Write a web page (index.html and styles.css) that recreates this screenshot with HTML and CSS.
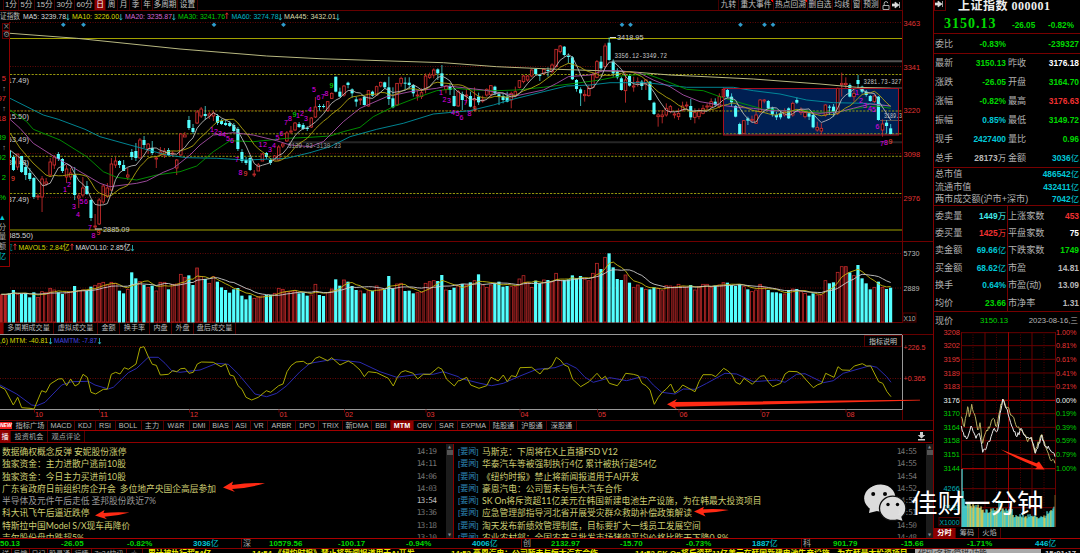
FILE: index.html
```html
<!DOCTYPE html>
<html lang="zh-CN">
<head>
<meta charset="utf-8">
<title>上证指数 000001</title>
<link rel="stylesheet" href="styles.css">
</head>
<body>
<div class="app">
  <div class="workspace">
    <main class="main">
      <nav class="toolbar">
        <div class="periods"><span></span><span>1分</span><span>5分</span><span>15分</span><span>30分</span><span>60分</span><span class="on">日</span><span>周</span><span>月</span><span>季</span><span>年</span><span>多周期</span><span>设置</span></div>
        <div class="tools"><span>九转</span><span class="dot">重大事件</span><span class="dot">热点回溯</span><span>删自选</span><span>均线</span><span>窗</span><span>预测</span>
          <span><svg width="8" height="9" viewBox="0 0 8 9"><path d="M1 4.5h6v4H1zM2.2 4V2.2a1.8 1.6 0 0 1 3.6 0" fill="none" stroke="#aaa"/></svg></span>
          <span><svg width="9" height="8" viewBox="0 0 9 8"><path d="M0 3h3V1l4 3-4 3V5H0zM7.5 1v6" fill="#ddd" stroke="#ddd" stroke-width=".7"/></svg></span></div>
      </nav>
      <svg id="price" class="chart" width="933" height="312" viewBox="0 11 933 312"></svg>
      <nav class="voltabs"><span class="on"></span><span>多周期成交量</span><span>虚拟成交量</span><span>金额</span><span>换手率</span><span>内盘</span><span>外盘</span><span>盘后成交量</span></nav>
      <svg id="mtm" class="chart" width="933" height="86" viewBox="0 334 933 86"></svg>
      <nav class="indicators"><span class="new"><b>NEW</b></span><span>指标广场</span><span>MACD</span><span>KDJ</span><span>RSI</span><span>BOLL</span><span>主力</span><span>W&amp;R</span><span>DMI</span><span>BIAS</span><span>ASI</span><span>VR</span><span>ARBR</span><span>DPO</span><span>TRIX</span><span>新DMA</span><span>BBI</span><span class="on">MTM</span><span>OBV</span><span>SAR</span><span>EXPMA</span><span>陆股通</span><span>沪股通</span><span>深股通</span></nav>
      <nav class="newstabs"><span class="on">播</span><span>投资机会</span><span>观点评论</span>
        <svg class="dl" width="9" height="9" viewBox="0 0 9 9"><path d="M3 0h3v3h2.3L4.500 6.600.7 3H3zM1 7h7v1.600H1z" fill="#ccc"/></svg></nav>
      <section class="news">
        <ul class="left">
          <li><span>数据确权概念反弹 安妮股份涨停</span><time>14:19</time></li>
          <li><span>独家资金：主力进散户逃前10股</span><time>14:11</time></li>
          <li><span>独家资金：今日主力买进前10股</span><time>14:06</time></li>
          <li><span>广东省政府日前组织房企开会&nbsp; 多位地产央国企高层参加</span><time>14:03</time></li>
          <li class="read"><span>半导体及元件午后走低 圣邦股份跌近7%</span><time>13:54</time></li>
          <li><span>科大讯飞午后逼近跌停</span><time>13:36</time></li>
          <li><span>特斯拉中国Model S/X现车再降价</span><time>13:18</time></li>
          <li><span>吉尔股份盘中跌超5%</span><time>13:10</time></li>
        </ul>
        <div class="scroll"><i>▲</i><b></b><i>▼</i></div>
        <ul class="right">
          <li><em>[要闻]</em><span>马斯克：下周将在X上直播FSD V12</span><time>14:55</time></li>
          <li><em>[要闻]</em><span>华泰汽车等被强制执行4亿 累计被执行超54亿</span><time>14:55</time></li>
          <li><em>[要闻]</em><span>《纽约时报》禁止将新闻报道用于AI开发</span><time>14:54</time></li>
          <li><em>[要闻]</em><span>豪恩汽电：公司暂未与恒大汽车合作</span><time>14:52</time></li>
          <li><em>[要闻]</em><span>SK On将斥资超11亿美元在韩国新建电池生产设施，为在韩最大投资项目</span><time>14:52</time></li>
          <li><em>[要闻]</em><span>应急管理部指导河北省开展受灾群众救助补偿政策解读</span><time>14:51</time></li>
          <li><em>[要闻]</em><span>淘天发布新绩效管理制度，目标要扩大一线员工发展空间</span><time>14:50</time></li>
          <li><em>[要闻]</em><span>农业农村部：全国农产品批发市场猪肉平均价格比昨天下降0.8%</span><time>14:48</time></li>
        </ul>
        <div class="scroll"><i>▲</i><b></b><i>▼</i></div>
      </section>
    </main>
    <aside class="side">
      <header><span class="go"><svg width="9" height="8" viewBox="0 0 9 8"><path d="M0 3h3V1l4 3-4 3V5H0zM7.500 1v6" fill="#ddd" stroke="#ddd" stroke-width=".7"/></svg></span><h1>上证指数 000001</h1></header>
      <div class="quote g"><strong>3150.13</strong><b>-26.05</b><b>-0.82%</b></div>
      <div class="rows one"><p><span>委比</span><b class="g">-0.83%</b></p><p><span></span><b class="g">-239327</b></p></div>
      <div class="rows six">
        <p><span>最新</span><b class="g">3150.13</b></p><p><span>昨收</span><b class="w">3176.18</b></p>
        <p><span>涨跌</span><b class="g">-26.05</b></p><p><span>开盘</span><b class="g">3164.70</b></p>
        <p><span>涨幅</span><b class="g">-0.82%</b></p><p><span>最高</span><b class="r">3176.63</b></p>
        <p><span>振幅</span><b class="c">0.85%</b></p><p><span>最低</span><b class="g">3149.72</b></p>
        <p><span>现手</span><b class="c">2427400</b></p><p><span>量比</span><b class="g">0.96</b></p>
        <p><span>总手</span><b>28173<u>万</u></b></p><p><span>金额</span><b class="c">3036<u>亿</u></b></p>
      </div>
      <div class="caps">
        <p><span>总市值</span><b class="c">486542<u>亿</u></b></p>
        <p><span>流通市值</span><b class="c">432411<u>亿</u></b></p>
        <p><span>两市成交额(沪市+深市)</span><b class="c">7042<u>亿</u></b></p>
      </div>
      <div class="rows stats">
        <p><span>委卖量</span><b class="lc">1449<u>万</u></b></p><p><span>上涨家数</span><b class="r">453</b></p>
        <p><span>委买量</span><b class="r">1425<u>万</u></b></p><p><span>平盘家数</span><b class="w">75</b></p>
        <p><span>卖金额</span><b class="c">69.66<u>亿</u></b></p><p><span>下跌家数</span><b class="g">1749</b></p>
        <p><span>买金额</span><b class="c">68.62<u>亿</u></b></p><p><span>市盈</span><b>14.81</b></p>
        <p><span>换手</span><b class="c">0.64%</b></p><p><span>市盈(动)</span><b>13.09</b></p>
        <p><span>均价</span><b class="g">23.66</b></p><p><span>市净率</span><b>1.31</b></p>
      </div>
      <div class="now"><span>现价</span><b class="g">3150.13</b><time>2023-08-16,三</time></div>
      <svg id="intraday" class="chart" width="147" height="199" viewBox="933 329 147 199"></svg>
      <nav class="sidetabs"><span class="on">分时</span><span>筹码</span><span>火焰</span></nav>
    </aside>
  </div>
  <footer class="indexbar"><b>50.13</b><b>-26.05</b><b>-0.82%</b><b class="c">3036<u>亿</u></b><i>深</i><b>10579.56</b><b>-100.17</b><b>-0.94%</b><b class="c">4006<u>亿</u></b><i>创</i><b>2132.97</b><b>-15.70</b><b>-0.73%</b><b class="c">1887<u>亿</u></b><i>科</i><b>901.79</b><b>-15.66</b><b>-1.71%</b><b class="c">446<u>亿</u></b></footer>
  <div class="ticker"><div class="mini"><span>详</span><span>反馈</span><span>日记</span><span>股灵通</span><span>行情</span><span>7x24快讯</span><span>-☆-</span></div><b>累计被执行超54亿</b><b>14:54 《纽约时报》禁止将新闻报道用于AI开发</b><b>14:52 豪恩汽电：公司暂未与恒大汽车合作</b><b>14:52 SK On将斥资超11亿美元在韩国新建电池生产设施，为在韩最大投资项目</b><span class="search">代码/名称/简拼/功能</span><b>15:01:17</b></div>

  <div class="dock"><span class="r">5</span><span>↑</span><span class="r">97</span><span>↑</span><span class="r">18</span><span></span><span class="g">89</span><span>↑</span><span class="g">92</span><span></span><span class="g">2</span><span></span><span class="g">%</span><span></span><span class="c">▲</span><span>分</span><span>量</span><span>额</span><span class="c">亿</span></div>
  <div class="dockicons"><span>×</span><span>⚙</span></div>
  <svg class="marks" width="1080" height="553" viewBox="0 0 1080 553">
    <g fill="#ff2a14">
      <path d="M667 404.200L677 399l-2 3 245-2.300v.8L675 406.700l2 2.800z"/>
      <path d="M223 487.500l10-6-1 3.400q18-2.500 33-1.700q-16 5-33 5.800l3 3z"/>
      <path d="M95 515.500l9.500-5.500-1 3q13-1.500 26-.4q-12 3.500-25 4.200l2.500 2.500z"/>
      <path d="M694 511.500l10-4.700-1 2.500q14-.8 26 .7q-13 2.500-25.500 3l2 3.500z"/>
      <path d="M1000.500 449.300l36 14 2.500-1.800 5.500 8-9.500-.3 2-2.300q-22-8.500-36.500-17.600z"/>
    </g>
    <g class="wechat">
      <path d="M869 513l1-5.500A15 13.500 0 1 1 877 511z" fill="#e8e8e8"/>
      <ellipse cx="879" cy="498.300" rx="14.800" ry="13" fill="#e8e8e8"/>
      <ellipse cx="892.700" cy="508.300" rx="13.200" ry="12.200" fill="#e8e8e8" stroke="#111" stroke-width="1.300"/>
      <path d="M896 519l6.500 1.800-2-6z" fill="#e8e8e8"/>
      <g fill="#050505"><circle cx="873.200" cy="494" r="2"/><circle cx="885" cy="494" r="2"/><circle cx="888" cy="504.500" r="1.700"/><circle cx="897.500" cy="504.500" r="1.700"/></g>
    </g>
  </svg>
  <div class="watermark">佳财一分钟</div>
</div>
<script src="charts.js"></script>
</body>
</html>
```
FILE: styles.css
```css
* { box-sizing: border-box; margin: 0; padding: 0; }
body { background: #000; overflow: hidden; }
.app {
  position: relative; width: 1080px; height: 553px; overflow: hidden;
  display: flex; flex-direction: column; background: #000; color: #aaa;
  font-family: "Liberation Sans", "Noto Sans CJK SC", sans-serif; font-size: 8px; line-height: 10px; white-space: nowrap;
}
.workspace { display: grid; grid-template-columns: 933px 147px; height: 538px; }
.main { display: flex; flex-direction: column; min-width: 0; }
.chart { display: block; flex: none; }
svg text { white-space: pre; }
u { text-decoration: none; font-weight: 400; }
i, em { font-style: normal; }
.g { color: #00d800; } .r { color: #f03030; } .c { color: #00c8d8; } .lc { color: #40e8e8; } .w { color: #fff; }

.toolbar { height: 11px; width: 903px; display: flex; justify-content: space-between; border-bottom: 1px solid #600; font-size: 7.700px; color: #c0c0c0; }
.toolbar span { display: flex; justify-content: center; align-items: center; height: 10px; border-right: 1px solid #400; }
.periods { display: grid; grid-template-columns: 4px 15px 16px 20px 20px 20px 11px 12px 12px 12px 11px 25px 20px; }
.tools { display: grid; grid-template-columns: 20px 35px 34px 25px 19px 10px 19px 10px 12px; border-left: 1px solid #400; }
.toolbar .on, .voltabs .on, .indicators .on, .newstabs .on, .sidetabs .on { background: #8c0000; color: #fff; }
.tools .dot { background: linear-gradient(225deg, #f00 2px, transparent 2px); }

.voltabs { display: grid; grid-template-columns: 4px 50px 44px 22px 30px 22px 22px 42px; height: 11px; font-size: 7.100px; color: #bbb; }
.voltabs span { text-align: center; line-height: 11px; height: 11px; border-right: 1px solid #500; overflow: hidden; }

.indicators { display: grid; grid-template-columns: 13px 35px 27px 20.500px 20px 26px 22px 26px 20px 23px 18px 17.500px 28px 23px 24px 29px 19px 23px 22px 22px 32px 28px 29px 30px; height: 11px; border-top: 1px solid #600; border-bottom: 1px solid #a00000; font-size: 7.200px; color: #bbb; }
.indicators span { text-align: center; line-height: 10px; height: 9px; border-right: 1px solid #500; overflow: hidden; }
.indicators .on { font-weight: 700; }
.indicators .new { border: 0; text-align: left; }
.new b { display: block; width: 12px; height: 7px; margin-top: 1px; background: #f02020; color: #fff; font: italic 700 5px/7px "Liberation Sans", sans-serif; }
.newstabs { display: grid; grid-template-columns: 11px 37px 37px 1fr; height: 12px; border-bottom: 1px solid #900000; font-size: 7.200px; width: 932px; }
.newstabs span { text-align: center; line-height: 11px; border-right: 1px solid #500; overflow: hidden; }
.newstabs .dl { justify-self: end; margin: 1px 6px 0 0; }

.news { display: grid; grid-template-columns: 446px 7px 473px 7px; height: 94px; margin-top: 1px; overflow: hidden; font-size: 8.750px; color: #cdcd72; }
.news ul { list-style: none; padding-top: 2px; }
.news li { display: flex; height: 12.250px; line-height: 12.250px; padding-left: 2px; }
.news .left { padding-right: 10px; }
.news .right { padding-left: 2px; padding-right: 10px; border-left: 1px solid #800; }
.news span { font-family: Lato, "Noto Sans CJK SC", sans-serif; word-spacing: -.3px; }
.news time { margin-left: auto; color: #747474; font: 7.900px/12.250px "DejaVu Sans Mono", monospace; letter-spacing: -.9px; }
.news em { width: 24px; color: #2d87b8; font-size: 8px; }
.news .read { color: #999; }
.news .read time { color: #bbb; }
.scroll { display: flex; flex-direction: column; align-items: center; background: #1c1c1c; height: 94px; }
.scroll i { color: #888; font: 4px/6px "DejaVu Sans", sans-serif; }
.scroll b { width: 6px; height: 5px; background: #555; margin-bottom: auto; }

.side { border-left: 1px solid #800000; display: flex; flex-direction: column; font-size: 8.400px; color: #b8b8b8; }
.side header { display: flex; height: 14px; }
.go { width: 12px; height: 11px; border: 1px solid #600; border-top: 0; }
h1 { margin-left: 12px; font: 700 12px/13px "Liberation Serif", "Noto Sans CJK SC", serif; color: #eee; letter-spacing: .5px; }
.quote { display: grid; grid-template-columns: 78px 36px 1fr; align-items: center; height: 20px; border-bottom: 1px solid #700; }
.quote strong { font: 700 14px/18px "Liberation Serif", serif; letter-spacing: 1px; padding: 1px 0 0 10px; }
.quote b { font-size: 8.200px; padding-top: 5px; }
.rows { display: grid; grid-template-columns: 73px 73px; border-bottom: 1px solid #700; align-content: start; }
.side p { display: flex; justify-content: space-between; align-items: center; padding: 0 1px; min-width: 0; }
.side p span, .now span { font: 9.100px/12px "Liberation Sans", "Noto Sans CJK SC", sans-serif; color: #b0b0b0; }
.one { height: 20px; } .one p { height: 19px; }
.six { height: 114px; } .six p { height: 19px; padding-bottom: 1px; }
.caps { height: 38px; border-bottom: 1px solid #700; } .caps p { height: 12.600px; }
.stats { height: 106px; padding-top: 1px; background: linear-gradient(90deg, transparent 73px, #700 73px, #700 74px, transparent 74px); } .stats p { height: 17.400px; }
.now { display: grid; grid-template-columns: 45px 28px 1fr; align-items: center; height: 17px; padding-left: 1px; }
.now b { font-weight: 400; font-size: 7.800px; } .now time { text-align: right; font-size: 7.700px; padding-right: 2px; }
.sidetabs { display: grid; grid-template-columns: 22px 23px 22px; height: 10px; font-size: 7.200px; }
.sidetabs span { text-align: center; height: 10px; border-right: 1px solid #500; }
.sidetabs .on { font-weight: 700; }

.indexbar { display: grid; grid-template-columns: 61px 66px 66px 48px 28px 69px 68px 66px 49px 30px 69px 66px 66px 49px 32px 68px 66px 68px 45px; height: 11px; border-top: 1px solid #a00; border-bottom: 1px solid #800; line-height: 9px; font-size: 8px; color: #00d800; }
.indexbar .c { color: #00c8d8; }
.indexbar i { color: #a8a8a8; border-left: 1px solid #600; padding-left: 1px; }
.ticker { display: grid; grid-template-columns: 148px 104px 199px 184px 280px 130px 35px; height: 4px; overflow: hidden; font-size: 7.800px; line-height: 10px; color: #e8e800; }
.ticker b { overflow: hidden; height: 4px; }
.ticker b:last-child { color: #ccc; }
.mini { display: grid; grid-template-columns: 12px 18px 18px 24px 20px 35px 16px; color: #aaa; font-size: 7px; overflow: hidden; }
.mini span { border-right: 1px solid #600; text-align: center; overflow: hidden; }
.search { background: #aaa; color: #222; padding-left: 3px; width: 126px; }

.dock { position: absolute; left: 0; top: 22px; width: 10px; height: 245px; background: #000; border: solid #900000; border-width: 0 1px 1px 0; padding-top: 52px; display: flex; flex-direction: column; overflow: hidden; font-size: 7.600px; }
.dock span { flex: 0 0 9.900px; direction: rtl; width: 6px; line-height: 9.900px; }
.dockicons { position: absolute; left: 2px; top: 23px; width: 8px; display: flex; flex-direction: column; color: #888; }
.dockicons span { height: 8px; font: 8px/6px "DejaVu Sans", sans-serif; text-align: center; border: 1px solid #600; }
.marks { position: absolute; left: 0; top: 0; }
.wechat { opacity: .95; }
.watermark { position: absolute; left: 911px; top: 485px; font: 26.500px/34px "Noto Sans CJK SC", sans-serif; color: #fff; }
```
FILE: charts.js
```js
const NS = 'http://www.w3.org/2000/svg';

function add(svg, tag, attrs, text) {
  const el = document.createElementNS(NS, tag);
  for (const key in attrs) el.setAttribute(key, attrs[key]);
  if (text !== undefined) el.textContent = text;
  svg.appendChild(el);
  return el;
}
function label(svg, x, y, text, color, size, len) {
  const a = { x, y, fill: color, 'font-size': size || 8 };
  if (len) { a.textLength = len; a.lengthAdjust = 'spacingAndGlyphs'; }
  return add(svg, 'text', a, text);
}
function trend(svg, x, base, up) {
  const d = up ? `M${x} ${base}v-6M${x - 1.3} ${base - 4.3}l1.300-1.900 1.300 1.900` : `M${x} ${base - 5}v6M${x - 1.3} ${base - 0.8}l1.300 1.900 1.300-1.900`;
  add(svg, 'path', { d, stroke: up ? '#e03030' : '#28b0b8', 'stroke-width': 0.9, fill: 'none' });
}
function rule(svg, x1, x2, y, color, dash, w) {
  add(svg, 'line', { x1, x2, y1: y, y2: y, stroke: color, 'stroke-width': w || 1, 'stroke-dasharray': dash || 'none' });
}
function path(svg, pts, color, w) {
  add(svg, 'polyline', { points: pts.map(p => p[0].toFixed(1) + ',' + p[1].toFixed(1)).join(' '), fill: 'none', stroke: color, 'stroke-width': w || 0.8 });
}
// Flat "x y x y" lists in third-of-pixel units, with an origin.
function seg(ox, oy, str) {
  const n = str.trim().split(/[\s,]+/).map(Number), out = [];
  for (let i = 0; i < n.length; i += 2) out.push([ox + n[i] / 3, oy + n[i + 1] / 3]);
  return out;
}
const xAt = k => 1.26 + 4.08 * k;

/* candles: direction, high, body top, body bottom, low */
const early = `C149 151 158 160|C155 157 170 171|R154 154 167 170|C156 156 172 173|C163 167 175 180|C168 173 179 181|C177 178 197 199|R194 196 197 200|R176 179 197 212|R178 182 184 186|R158 162 175 177|R155 157 165 169|C152 154 159 161|C158 159 171 173|R165 169 177 183|R168 173 177 180|C167 175 195 200|R193 196 198 208|R177 188 195 197|C181 186 194 195|C199 200 218 221|R214 226 227 230|R198 200 224 225|R184 186 202 204|R183 188 196 198|R158 164 190 191|R157 161 165 168|C160 161 165 168|C160 165 171 171|R168 175 177 180|C149 152 157 160|C143 151 158 161|R138 140 158 158|C136 140 145 148|R143 144 149 154|C141 148 153 155|R156 158 159 168|R147 152 154 156|R148 151 155 158|C148 150 155 156|R151 153 154 157|R159 160 168 175|R133 134 155 156|R132 135 137 137|C116 120 128 130|C124 128 132 134|R110 112 123 124|R107 109 116 118|C106 114 116 120|R112 114 116 119|R111 113 116 121|C114 116 123 125|C119 121 124 125|C120 123 125 126|C121 123 126 127|C123 125 131 132|C127 129 149 151|C149 152 161 163|C157 160 163 165|C155 158 170 171|R170 174 175 177|R163 165 171 171|R153 154 161 161|C152 153 157 159|C158 160 163 165|R155 156 160 160|R145 147 160 161|R142 144 146 148|R131 133 141 142|R126 131 132 134|R122 123 130 131|C122 124 127 128|C123 125 129 130|C126 128 129 131|R117 118 127 128|R97 107 117 118`;
const late = `C312 318 321 332|C312 318 321 325|R303 305 332 335|R277 280 295 297|C230 230 275 277|C263 275 290 292|R255 258 285 290|C245 248 255 265|C265 268 280 293|C290 298 305 320|R295 297 299 315|C287 290 315 317|R270 272 318 320|C272 275 287 290|R257 260 285 287|R245 247 258 262|C245 247 262 267|C230 262 297 315|C262 295 322 325|R250 250 315 318|R230 235 250 260|C232 248 251 268|C232 248 255 267|C253 255 280 290|R272 285 288 302|R265 278 290 297|R220 228 265 280|R218 225 232 237|R205 210 225 235|C205 208 220 240|C195 220 258 260|R255 258 268 280|C250 258 270 285|C265 288 318 320|R270 275 318 320|C275 282 300 330|R268 285 288 310|C275 288 320 322|R262 297 300 335|C278 290 307 315|R287 300 303 308|R265 268 285 290|R255 257 283 292|C257 260 280 285|C278 283 288 315|C280 288 300 310|C275 290 305 307|R275 280 300 325|R260 275 288 292|R240 242 262 265|R225 228 245 250|R225 228 240 245|R208 210 228 232|C205 207 222 225|C222 225 228 243|R205 208 220 225|C202 210 213 230|R190 195 215 220|R147 148 200 202|R135 138 155 160|C138 140 165 170|C160 168 171 190|C168 172 238 240|C237 240 267 275|C262 268 280 318|R270 283 287 305|R255 265 287 290|R218 225 262 265|R180 185 232 235|C168 185 205 210|R130 138 200 205|C112 128 180 182|C178 185 220 230|C205 215 232 238|C230 235 270 272|R220 240 272 308|C222 228 257 260|R230 258 261 275|R232 245 249 260|C240 245 258 270|R237 240 250 270|C243 245 300 302|C305 308 342 345|R340 345 350 380|R330 345 350 370|R310 325 345 350|R315 320 335 340|R335 342 345 355|R325 340 350 360|R305 318 330 335|R305 315 318 330|C297 318 352 360|R325 338 352 370|R325 335 350 358|R315 325 340 343|R310 318 321 332|R295 305 320 325|C295 305 315 320|R280 290 320 325|R262 268 290 298|C265 270 290 295|C280 290 307 320|C315 318 350 352|C368 372 403 405|R360 362 400 402|C350 355 362 375|R347 358 361 368|R335 345 370 372|R297 300 335 340|R297 300 303 310|C300 303 325 330|C320 325 343 350|C335 345 352 360|C330 340 352 358|R325 335 345 350|C322 325 355 357|R305 310 345 350|C292 300 308 312|R322 328 338 345|R332 338 350 355|C338 340 350 360|C340 345 382 385|R365 382 390 395|R370 385 393 403|R313 315 345 350|C315 320 323 345|C312 320 335 350|R263 265 340 345|R218 250 254 290|R232 250 254 265|C250 255 290 292|R270 280 290 305|C225 240 252 265|C257 260 275 280|C270 275 285 290|C285 288 303 305|R283 288 305 310|C288 290 360 362|R358 372 390 410|C360 368 378 400|C372 385 402 404`;
const candles = [];
early.split('|').forEach((s, i) => {
  const v = s.slice(1).split(' ').map(Number);
  candles.push({ k: i + 2, up: s[0] === 'R', hi: v[0], top: v[1], bot: v[2], lo: v[3] });
});
late.split('|').forEach((s, i) => {
  const v = s.slice(1).split(' ').map(n => Number(n) / 3);
  candles.push({ k: i + 78, up: s[0] === 'R', hi: v[0], top: v[1], bot: v[2], lo: v[3] });
});
const dir = {};
candles.forEach(c => { dir[c.k] = c.up; });
const CY = '#54ffff', RED = '#d83030', AXIS = '#e03434';

/* price pane */
const P = document.getElementById('price');
[['证指数', 0, 20, '#bbb'], ['MA5: 3239.78', 23, 43, '#ddd', '↓'], ['MA10: 3226.00', 72, 47, '#d8d800', '↓'], ['MA20: 3235.87', 125, 47, '#d468d4', '↓'], ['MA30: 3241.76', 178, 47, '#00cc00', '↑'], ['MA60: 3274.78', 231.500, 47, '#00b8c8', '↓'], ['MA445: 3432.01', 284, 52, '#d8d8a8', '↓']].forEach(m => {
  label(P, m[1], 19, m[0], m[3], 7.5, m[2]);
  if (m[4]) trend(P, m[1] + m[2] + 1.800, 19, m[4] === '↑');
});
[22.5, 66.5, 110.5, 153.5, 197.5, 253.5, 288].forEach(y => rule(P, 10, 902, y, '#600808', '1 1.5'));
add(P, 'rect', { x: 723.500, y: 88.500, width: 175, height: 46.500, fill: '#001f52' });
rule(P, 10, 902, 38.500, '#a0a000');
rule(P, 10, 902, 230, '#a0a000');
[74.5, 111, 133.8, 156.3, 193.5].forEach(y => rule(P, 10, 902, y, '#a8a810', '2.2 1.4', 0.9));
rule(P, 612, 902, 61.300, '#505050', '', 2);
rule(P, 289, 902, 142.200, '#262626', '', 2);
rule(P, 860, 902, 88, '#666');
rule(P, 880, 902, 120.500, '#555');
[63.3, 83.5, 214, 283.5, 622, 630.5, 740.5, 764.5, 773].forEach(x => add(P, 'path', { d: `M${x} 22.4l2.4 2.3-2.4 2.3-2.4-2.3z`, fill: '#2e9ccc' }));
[['17.49)', 82.500], ['15.50)', 119], ['53.49)', 141.500], ['39.48)', 164.500], ['37.49)', 201.500], ['385.50)', 238]].forEach(a => {
  const t = label(P, a[0].length > 6 ? 33 : 29, a[1], a[0], '#d0d0d0', 7.6);
  t.setAttribute('text-anchor', 'end');
});
candles.forEach(c => {
  const x = xAt(c.k), col = c.up ? RED : CY;
  if (c.up) {
    add(P, 'path', { d: `M${x} ${c.hi}V${c.top}M${x} ${c.bot}V${c.lo}`, stroke: col, 'stroke-width': 0.8 });
    add(P, 'rect', { x: x - 1.3, y: c.top, width: 2.6, height: Math.max(1, c.bot - c.top), fill: '#100', stroke: col, 'stroke-width': 0.8 });
  } else {
    add(P, 'path', { d: `M${x} ${c.hi}V${c.lo}`, stroke: col, 'stroke-width': 0.7 });
    add(P, 'rect', { x: x - 1.6, y: c.top, width: 3.1, height: Math.max(1, c.bot - c.top), fill: col });
  }
});
const closes = candles.map(c => (c.up ? c.top : c.bot));
function average(n, from, head) {
  const out = head.slice();
  for (let i = Math.max(from - 2, n - 1); i < closes.length; i++) {
    let s = 0;
    for (let j = i - n + 1; j <= i; j++) s += closes[j];
    out.push([xAt(i + 2), s / n]);
  }
  return out;
}
path(P, [].concat(seg(0, 0, '30 100 230 115 540 147 800 168 960 176'), seg(310, 0, '400 188 560 200 740 208 960 215'), seg(620, 0, '150 225 400 237 600 252 710 262 812 265')), '#b8b880', 1);
path(P, [].concat(seg(0, 0, '30 295 130 345 175 358 255 388'), seg(0, 120, '300 50 390 75 500 105 560 113 650 115 740 120 860 115 930 98'), seg(310, 0, '60 440 120 410 200 388 280 370 370 342 480 332 550 315 600 300 700 275 770 258 840 255 900 248'), seg(620, 0, '0 248 80 248 200 262 340 262 400 272 480 282 560 300 640 308 740 310 812 318')), '#0092a0', 0.9);
path(P, [].concat(seg(0, 0, '30 330 80 365 100 388'), seg(0, 120, '180 60 260 110 310 155 350 172 410 180 470 165 540 155 590 138 640 95 690 62 760 65 860 55'), seg(310, 0, '0 412 60 408 100 395 150 382 190 350 250 320 320 293 380 272 440 265 490 270 560 272 620 270 700 262 780 252 870 240'), seg(620, 0, '0 228 80 222 130 240 200 268 250 272 300 290 360 308 430 328 500 332 560 332 600 337 660 335 710 325 770 318 812 325')), '#009a00', 0.9);
path(P, [].concat(seg(0, 0, '30 358 60 385'), seg(0, 120, '100 70 163 110 215 140 300 190 330 200 410 190 440 183 490 157 520 145 570 105 600 75 640 45 700 38 760 45 830 62 870 75'), seg(310, 0, '0 440 40 425 100 365 150 325 230 290 300 275 380 265 410 258 450 262 520 270 580 280 620 287 700 270 740 250 775 230 840 225 880 212'), seg(620, 0, '0 212 60 220 100 240 150 260 190 285 240 305 300 315 350 322 400 325 450 332 500 332 540 335 600 340 660 335 700 325 750 312 812 318')), '#a850a8', 0.9);
path(P, average(10, 12, [[10, 133], [20, 148], [33, 163], [46, 175]]), '#b0a410', 0.9);
path(P, average(5, 12, [[10, 150], [20, 158], [30, 170], [43, 186]]), '#b8b8b8', 0.9);
add(P, 'rect', { x: 723.500, y: 88.500, width: 175, height: 46.500, fill: 'none', stroke: '#a81020' });

const M = '#e000e8', R9 = '#ff4838', G9 = '#00f000';
[[13, 179, 9, R9], [65, 190, 1], [69, 185, 2], [74, 207, 3], [78, 215, 4], [81.5, 202, 5], [86, 202, 6], [90, 228, 7], [93.500, 236, 8], [98.500, 233, 9, R9],
 [212, 130, 1], [216, 132, 2], [220, 134, 3], [224, 135, 4], [228, 139, 5], [232, 141, 6], [237, 160, 7], [240.5, 173, 8], [245.5, 174, 9, R9],
 [260.5, 145, 1], [265, 145, 2], [270, 149.500, 3], [274, 146, 4], [277.5, 138, 5], [281.5, 134, 6], [286, 123, 7], [290, 119, 8], [294.5, 115, 9, G9], [298, 116, 1], [302, 114, 2], [306, 119, 3], [310, 110, 4], [314, 90, 5], [318.500, 97.500, 6], [323, 97, 7], [326.500, 94, 8], [331.500, 85.500, 9, G9],
 [441, 93, 1], [444.500, 100, 2], [449, 101, 3], [453, 113, 4], [457.500, 114, 5], [461.500, 117.500, 6], [465.500, 103, 7], [469.500, 114, 8], [474.500, 109, 9, R9],
 [857, 93, 1], [861, 101, 2], [865, 106, 3], [870, 109, 4], [874, 110, 5], [877.500, 127, 6], [882, 144, 7], [886, 142.500, 8], [890.500, 142, 9, R9]].forEach(a => label(P, a[0] - 1.9, a[1] + 2.4, a[2], a[3] || M, 7));
const mono = '"Liberation Mono", monospace';
[['2885.09', 103, 232, 26.500, 8], ['3418.95', 617, 40, 26.500, 8], ['3356.12-3349.72', 614.500, 57.500, 52.500, 7.500], ['3139.03-3130.23', 288, 148, 53, 7.500], ['3281.73-327', 863.500, 84, 38, 7.500], ['3189.3', 884, 117.500, 18, 7.500]].forEach((a, i) => {
  label(P, a[1], a[2], a[0], i === 3 ? '#a0a0a0' : '#c8c8c8', a[4], a[3]).setAttribute('font-family', i < 2 ? 'Liberation Sans' : mono);
});
rule(P, 95, 102, 229, '#ddd');
rule(P, 610, 616, 37.500, '#ddd');
add(P, 'path', { d: 'M0 241.500H933M0 322.500H902M902.500 11V323', stroke: '#700000', fill: 'none' });
[['3463', 22.5], ['3341', 66.5], ['3220', 110], ['3098', 153.5], ['2976', 197.5]].forEach(a => label(P, 903.500, a[1] + 3, a[0], AXIS, 8, 16.5));
label(P, 903.500, 256, '5730', '#b8b8b8', 8, 16);
label(P, 903.500, 291, '2889', '#b8b8b8', 8, 16);
add(P, 'rect', { x: 903, y: 313, width: 13, height: 9, fill: 'none', stroke: '#500' });
label(P, 903.500, 321, 'X10', '#b0b0b0', 7.500, 12);
label(P, 9.500, 250, '亿', '#00b8c8', 7, 3); trend(P, 15, 250, true);
label(P, 18.500, 250, 'MAVOL5: 2.84亿', '#d8d800', 7.5, 51); trend(P, 72, 250, true);
label(P, 75.500, 250, 'MAVOL10: 2.85亿', '#ddd', 7.5, 55); trend(P, 132.500, 250, false);

/* volume: bar tops below y=240, third-of-pixel units */
const tops = '163 163 160 150 163 162 160 172 157 172 155 157 145 150 157 162 157 155 138 152 150 152 140 136 130 127 135 127 130 152 160 148 97 115 125 135 142 137 153 127 127 148 133 132 103 112 106 135 84 110 117 130 110 125 142 150 158 148 144 167 178 166 175 170 168 165 165 160 145 148 155 155 152 160 158 167 165 133 165 168 158 147 118 137 120 125 138 150 153 160 152 152 138 148 148 108 145 132 130 153 152 160 158 157 130 125 122 123 105 150 150 143 138 132 135 127 122 103 135 142 135 130 125 140 138 140 140 117 107 127 142 122 130 120 120 125 100 122 120 118 106 115 108 118 122 100 70 87 52 40 82 117 120 105 128 142 135 142 148 148 142 145 152 137 138 140 133 140 142 135 150 140 133 133 142 137 135 128 128 135 138 133 140 148 155 150 133 143 150 157 157 160 162 150 147 147 155 160 167 160 165 165 122 130 127 97 80 80 97 107 75 115 130 148 142 125 142 147 143'.split(' ').map(n => 240 + n / 3);
tops.forEach((y, k) => {
  const x = xAt(k);
  if (dir[k]) add(P, 'rect', { x: x - 1.4, y, width: 2.8, height: 322 - y, fill: k % 3 ? '#0c0000' : '#481010', stroke: '#c02828', 'stroke-width': 0.8 });
  else add(P, 'rect', { x: x - 1.7, y, width: 3.2, height: 322.5 - y, fill: k > 1 ? CY : '#b42424' });
});
[[5, '#c4b810'], [10, '#ccc']].forEach(([n, col]) => path(P, tops.map((_, i) => {
  const part = tops.slice(Math.max(0, i - n + 1), i + 1);
  return [xAt(i), part.reduce((a, b) => a + b, 0) / part.length];
}), col, 0.9));

/* MTM pane */
const T = document.getElementById('mtm');
rule(T, 0, 902, 346.500, '#680808', '1 1.5');
rule(T, 0, 902, 378.500, '#680808', '1 1.5');
add(T, 'path', { d: 'M0 334.500H902.500V409.500H0', stroke: '#999', fill: 'none' });
add(T, 'path', { d: 'M902 334.500H933M902.500 410V420', stroke: '#600', fill: 'none' });
label(T, 0, 343.200, ',6) MTM: -40.81', '#d8d800', 7.5, 48); trend(T, 50.500, 343, false);
label(T, 54, 343.200, 'MAMTM: -7.87', '#4444e0', 7.5, 43); trend(T, 99.500, 343, false);
add(T, 'rect', { x: 864.500, y: 335.500, width: 37, height: 11, fill: '#000', stroke: '#500' });
label(T, 869, 343.500, '指标说明', '#ccc', 7.200, 28);
label(T, 903.500, 349.500, '+226.5', AXIS, 7.500, 22); label(T, 903.500, 381, '+0.365', AXIS, 7.500, 22);
path(T, [].concat(seg(0, 240, '0 435 50 462 95 495 110 497 135 487 185 435 215 425 265 424 285 435 325 447 340 442 385 398 410 385 445 352 475 352 495 370 515 392 540 397 600 390 650 370 685 373 715 402 765 462 800 470 830 460 860 437 900 395 930 370 1000 358 1080 367 1140 395 1190 412 1260 402 1300 403 1330 395 1375 410'), seg(460, 240, '0 415 60 430 95 437 130 430 180 408 230 388 285 383 320 370 350 385 375 412 400 427 450 413 500 422 545 410 560 413 580 435 605 457 645 462 670 447 705 448 740 430 795 400 830 402 880 425 950 420 975 427 1010 403 1035 401 1090 428 1120 422 1150 400 1230 377 1250 382 1280 410 1293 427')), '#2a2ab0', 1);
path(T, [].concat(seg(0, 240, '0 440 15 448 40 495 53 472 65 503 90 505 102 507 125 452 138 457 151 432 175 417 187 416 200 437 212 417 225 438 236 432 249 403 262 412 273 457 287 462 310 448 322 448 334 403 347 397 360 402 373 383 385 388 408 372 420 323 432 320 444 348 457 373 469 376 481 405 505 403 518 392 530 395 542 386 555 385 567 400 580 397 592 372 604 366 640 367 663 380 677 372 690 405 701 408 714 437 726 448 738 472 755 480 775 472 799 452 812 457 836 437 849 432 861 395 873 377 888 366 910 364 922 372 934 370 946 355 958 350 983 362 995 353 1020 375 1045 363 1060 372 1080 390 1093 410 1105 395 1130 398 1165 415 1180 438 1192 412 1204 396 1216 392 1240 400 1253 417 1270 403 1290 403 1315 382 1326 388 1340 418 1363 438 1375 422'), seg(460, 240, '0 422 20 412 32 435 57 445 80 437 93 412 115 423 130 405 142 425 154 407 168 410 180 383 215 382 240 402 252 387 264 387 276 377 289 352 301 360 313 375 325 380 338 418 362 440 387 425 411 400 425 417 436 409 448 430 472 437 485 420 497 400 520 403 535 407 546 430 558 437 570 450 583 493 595 472 607 457 619 447 632 432 644 458 656 450 668 435 705 455 717 425 729 404 755 404 767 410 791 385 803 392 815 403 827 427 840 433 852 415 877 433 901 409 913 407 926 427 938 440 962 430 975 402 987 394 1011 395 1024 403 1036 417 1060 443 1073 434 1085 430 1097 400 1122 412 1134 380 1146 390 1170 391 1183 378 1207 371 1220 378 1232 378 1256 425 1268 430 1281 455 1293 470')), '#a8a800', 1);
[['10', 35], ['11', 100], ['12', 190], ['01', 279.5], ['02', 345], ['03', 426.5], ['04', 520.5], ['05', 598], ['06', 679.5], ['07', 761.5], ['08', 846.5]].forEach(a => {
  label(T, a[1], 417, a[0], AXIS, 7.500, 8);
  rule(T, a[1] - 1, a[1], 411, '#700', '', 3);
});

/* intraday pane */
const I = document.getElementById('intraday');
const ys = [38, 77, 118, 159, 200, 241, 281, 322, 362, 403, 446, 506, 563].map(v => 320 + v / 3);
ys.forEach((y, i) => rule(I, 960, 1054.500, y, i === 5 || i === 10 ? '#a00000' : '#680000', '', i === 5 || i === 10 ? 1.4 : 1));
[960.5, 984, 1007.5, 1031, 1054.5].forEach((x, i) => add(I, 'path', { d: `M${x} 332V527`, stroke: i === 2 ? '#980000' : '#680000' }));
[972, 995.5, 1019.5, 1043].forEach(x => add(I, 'path', { d: `M${x} 332V527`, stroke: '#500000', 'stroke-dasharray': '1 1.5' }));
const tone = i => (i < 5 ? AXIS : i === 5 ? '#eee' : '#00d000');
['3208', '3202', '3195', '3189', '3183', '3176', '3170', '3164', '3158', '3151', '3144'].forEach((s, i) => label(I, 942.500, ys[i] + 2.800, s, tone(i), 7.600, 16.5));
['1.00%', '0.81%', '0.61%', '0.41%', '0.21%', '0.00%', '0.19%', '0.39%', '0.59%', '0.79%', '1.00%'].forEach((s, i) => label(I, 1055, ys[i] + 2.800, s, tone(i), 7.600, 20.5));
label(I, 942.500, ys[11] + 2.800, '4266', '#00b0b8', 7.600, 16.5);
label(I, 942.500, ys[12] + 2.800, '2133', '#00b0b8', 7.600, 16.5);
add(I, 'rect', { x: 938, y: 517.500, width: 21, height: 8.500, fill: 'none', stroke: '#500' });
label(I, 938.500, 525, 'X1000', '#00b0b8', 7.200, 20);
const rnd = i => { const v = Math.sin(i * 91.7) * 4375.3; return v - Math.floor(v); };
for (let i = 0; i < 94; i++) {
  let h = 14 + 5 * rnd(i);
  if (i < 20) h += 6 - i * 0.1; else if (i > 50 && i < 84) h -= 6; else if (i >= 84) h += (i - 84) * 0.8 - 3;
  if (i < 3) h = [58, 36, 28][i];
  if (i === 37) h = 27;
  if (i === 93) h = 32;
  add(I, 'rect', { x: 960.5 + i, y: 527 - h, width: 1.05, height: h, fill: i === 93 ? '#665820' : rnd(i + 200) > 0.68 ? '#ffff78' : CY });
}
function jitter(pts, seed) {
  const out = [];
  for (let i = 0; i < pts.length - 1; i++) {
    const [a, b] = [pts[i], pts[i + 1]];
    const n = Math.max(1, Math.round((b[0] - a[0]) / 1));
    for (let j = 0; j < n; j++) out.push([a[0] + (b[0] - a[0]) * j / n, a[1] + (b[1] - a[1]) * j / n + (j ? (rnd(seed + i * 9 + j) - 0.5) * 5 : 0)]);
  }
  out.push(pts[pts.length - 1]);
  return out;
}
path(I, jitter(seg(855, 320, '316 290 325 320 335 260 340 290 347 253 358 290 365 330 372 308 380 370 392 330 400 325 412 295 422 320 432 270 440 237 455 262 470 290 485 322 500 335 515 365 527 352 537 398 555 345 565 365 580 410 597 430'), 3), '#b8b060', 1);
path(I, jitter(seg(855, 320, '316 318 325 350 335 352 345 318 360 355 370 340 380 397 392 380 405 350 415 325 425 330 432 280 440 237 450 265 457 285 467 318 483 350 495 325 510 352 525 352 538 400 545 385 557 345 565 375 583 390 597 410'), 50), '#e8e8e8', 1);
```
